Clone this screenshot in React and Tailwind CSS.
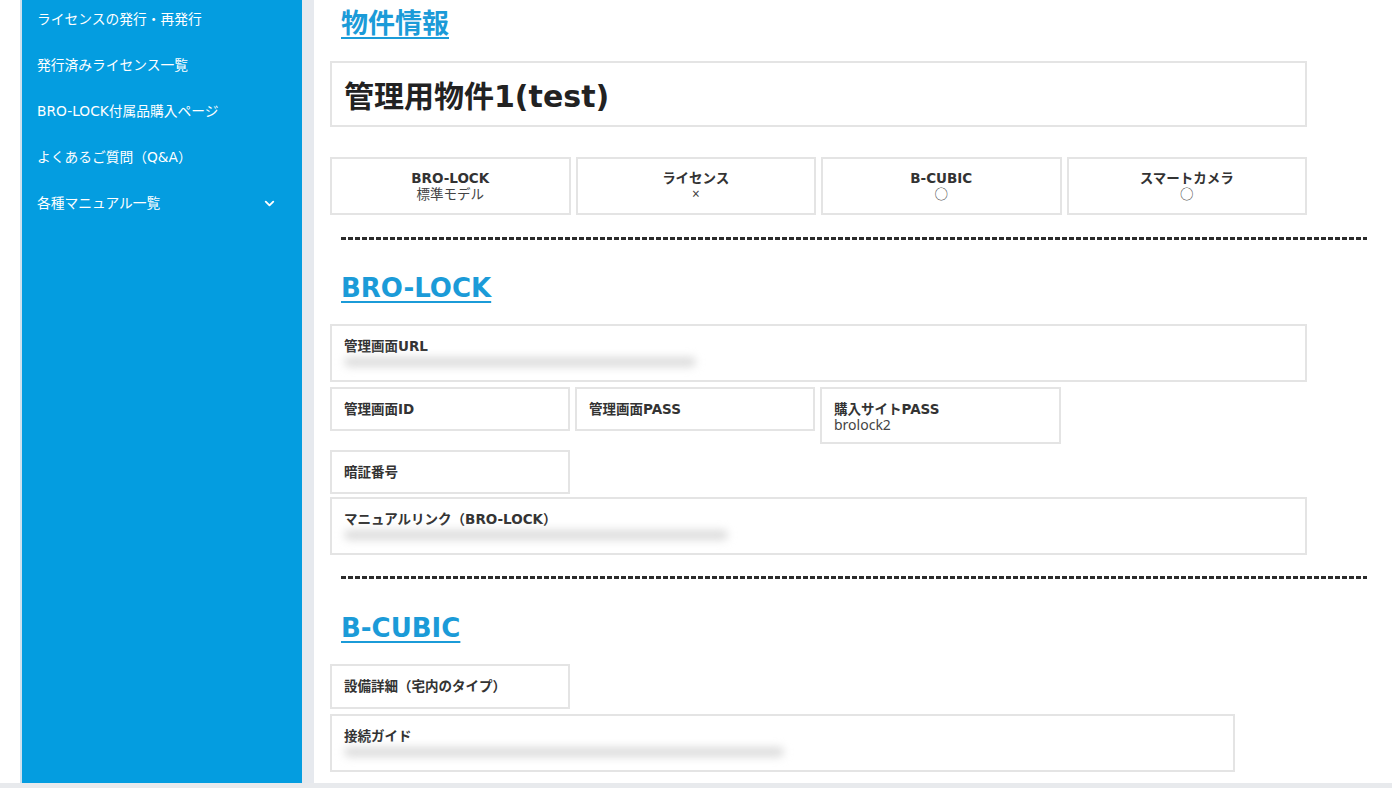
import React from 'react';
import { ChevronDown } from 'lucide-react';

const MENU = [
  'ライセンスの発行・再発行',
  '発行済みライセンス一覧',
  'BRO-LOCK付属品購入ページ',
  'よくあるご質問（Q&A）',
];

const SUMMARY = [
  { label: 'BRO-LOCK', value: '標準モデル' },
  { label: 'ライセンス', value: '×' },
  { label: 'B-CUBIC', value: '○' },
  { label: 'スマートカメラ', value: '○' },
];

const WIDE = "font-['DejaVu_Sans','Noto_Sans_CJK_JP',sans-serif]";

const SectionTitle = ({ children, className = '' }) => (
  <h2 className={`ml-[11px] ${WIDE} ${className}`}>
    <a className="text-[#1b9bd8] font-bold underline decoration-2 underline-offset-[4px]">
      {children}
    </a>
  </h2>
);

const Divider = ({ className = '' }) => (
  <div
    className={`ml-[11px] w-[1026px] h-[3px] bg-[repeating-linear-gradient(90deg,#2b2b2b_0px,#2b2b2b_5px,transparent_5px,transparent_7px)] ${className}`}
  />
);

const Field = ({ label, value, blur, className = '' }) => (
  <div className={`border-2 border-[#e4e4e4] px-[12px] pt-[12px] ${className}`}>
    <div className={`text-[13.5px] leading-4 font-bold text-[#333] ${WIDE}`}>{label}</div>
    {value && <div className="text-[14px] leading-[16px] text-[#444]">{value}</div>}
    {blur && (
      <div className="h-[16px] flex items-center">
        <div className={`h-[10px] ${blur} bg-[#dcdcdc] blur-[4px] rounded-full`} />
      </div>
    )}
  </div>
);

export default function App() {
  return (
    <div className="h-[788px] flex flex-col bg-white overflow-hidden font-['Noto_Sans','Noto_Sans_CJK_JP',sans-serif]">
      <div className="flex flex-1 min-h-0">
        <div className="w-[22px] border-r-2 border-[#cfe2ef]" />
        <aside className="w-[280px] bg-[#049de0] text-white">
          <ul className={`-mt-[4px] ${WIDE}`}>
            {MENU.map((item) => (
              <li key={item} className="h-[46px] flex items-center pl-[15px] text-[13.75px]">
                {item}
              </li>
            ))}
            <li className="h-[46px] flex items-center justify-between pl-[15px] pr-[25px] text-[13.75px]">
              <span>各種マニュアル一覧</span>
              <ChevronDown size={15} strokeWidth={3} />
            </li>
          </ul>
        </aside>
        <div className="w-[12px] bg-[#e6e9ee]" />
        <main className="flex-1 pl-4 pt-[6px]">
          <SectionTitle className="text-[27px] leading-[36px]">物件情報</SectionTitle>

          <div className="mt-[19px] w-[977px] h-[66px] border-2 border-[#e4e4e4] flex items-center pl-[12px] pt-[5px]">
            <div className={`text-[30px] font-bold text-[#222] ${WIDE}`}>管理用物件1(test)</div>
          </div>

          <div className="mt-[30px] w-[977px] grid grid-cols-4 gap-[5px]">
            {SUMMARY.map((s) => (
              <div
                key={s.label}
                className="h-[58px] border-2 border-[#e4e4e4] flex flex-col items-center justify-center text-[13.5px] leading-4 text-[#333]"
              >
                <div className={`font-bold ${WIDE}`}>{s.label}</div>
                <div className="text-[#444]">{s.value}</div>
              </div>
            ))}
          </div>

          <Divider className="mt-[22px]" />

          <SectionTitle className="mt-[28px] text-[26px] leading-[40px]">BRO-LOCK</SectionTitle>

          <Field className="mt-[16px] w-[977px] h-[58px]" label="管理画面URL" blur="w-[352px]" />

          <div className="mt-[5px] flex items-start gap-[5px]">
            <Field className="w-[240px] h-[44px]" label="管理画面ID" />
            <Field className="w-[240px] h-[44px]" label="管理画面PASS" />
            <Field className="w-[241px] h-[57px]" label="購入サイトPASS" value="brolock2" />
          </div>
          <Field className="mt-[6px] w-[240px] h-[44px]" label="暗証番号" />

          <Field
            className="mt-[3px] w-[977px] h-[58px]"
            label="マニュアルリンク（BRO-LOCK）"
            blur="w-[384px]"
          />

          <Divider className="mt-[21px]" />

          <SectionTitle className="mt-[29px] text-[26px] leading-[40px]">B-CUBIC</SectionTitle>

          <Field className="mt-[16px] w-[240px] h-[45px]" label="設備詳細（宅内のタイプ）" />
          <Field className="mt-[5px] w-[905px] h-[58px]" label="接続ガイド" blur="w-[440px]" />
        </main>
      </div>
      <div className="h-[5px] bg-[#e8eaed]" />
    </div>
  );
}
